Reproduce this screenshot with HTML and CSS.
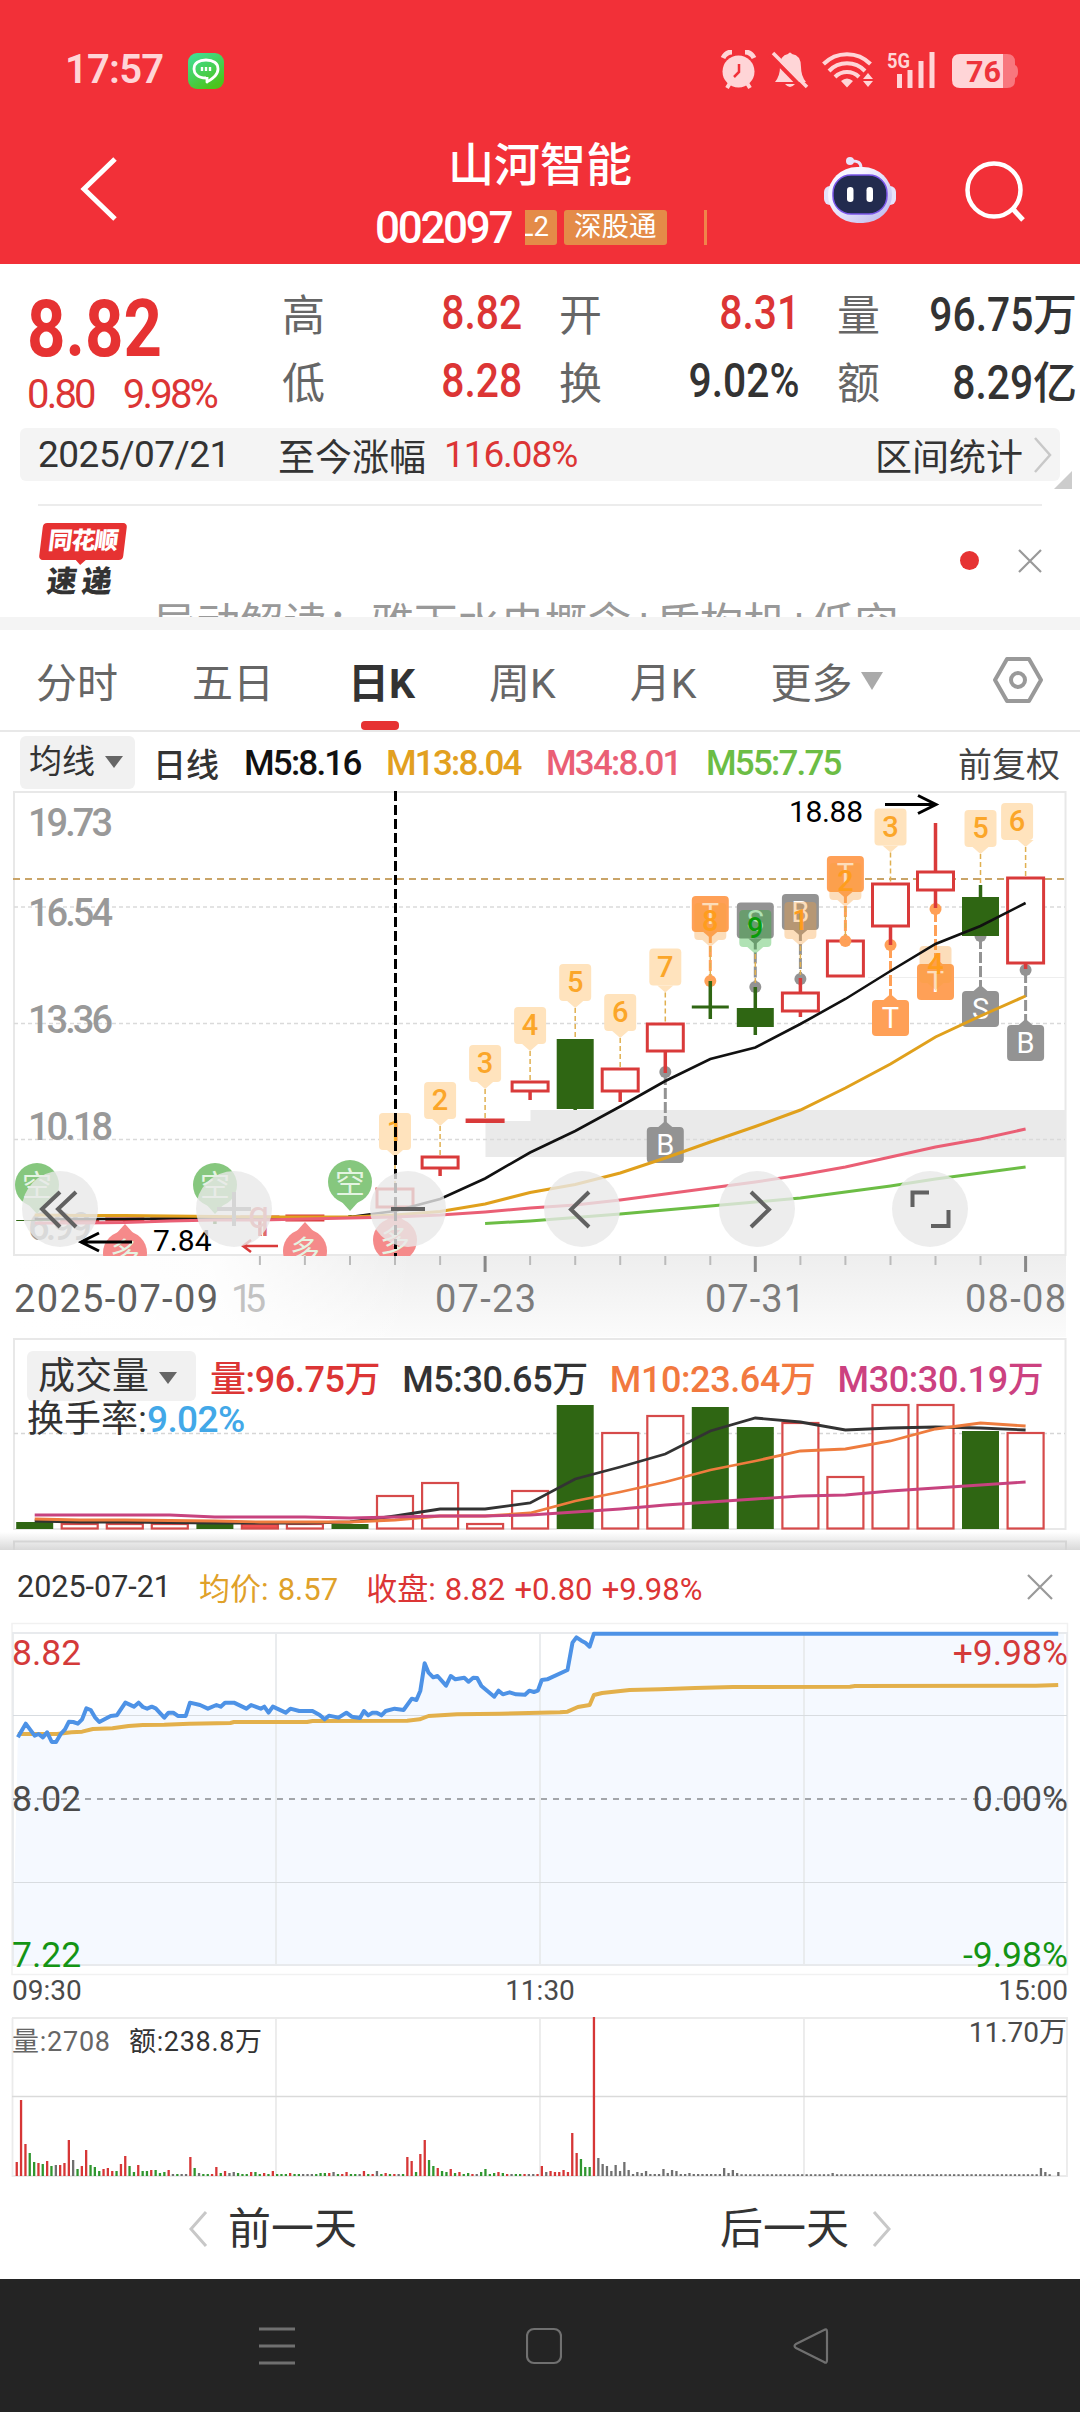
FILE: index.html
```
<!DOCTYPE html>
<html lang="zh-CN">
<head>
  <meta charset="UTF-8">
  <meta name="viewport" content="width=device-width, initial-scale=1.0">
  <title>山河智能 002097</title>
  <link rel="stylesheet" href="styles.css">
</head>
<body>

  <div class="top">
    <div class="status">
      <span class="clock">17:57</span>
      <svg class="app-icon" viewBox="0 0 36 36">
        <defs><linearGradient id="appg" x1="0" y1="0" x2="0.6" y2="1"><stop offset="0" stop-color="#3fe0a0"/><stop offset="1" stop-color="#4cc41c"/></linearGradient></defs>
        <rect width="36" height="36" rx="9" fill="url(#appg)"/>
        <path d="M18 25C9 25 6 20 6 16c0-6 5-9 12-9s12 3 12 9c0 6-5 9-11 13v-5" fill="none" stroke="#fff" stroke-width="2.800" stroke-linejoin="round"/>
        <path d="M14 14v4M18 14v4M22 14v4" stroke="#fff" stroke-width="2.4"/>
      </svg>
      <svg class="status-icons" viewBox="0 0 300 42" fill="#ffd5d7">
        <circle cx="18.500" cy="21.500" r="16"/>
        <path d="M3 8q3-6 9-6M25 2q6 0 9 6" fill="none" stroke="#ffd5d7" stroke-width="5"/>
        <path d="M10 33l-3 5M27 33l3 5" stroke="#ffd5d7" stroke-width="4"/>
        <path d="M19 14v8l-5 5" fill="none" stroke="#f23038" stroke-width="2.500"/>
        <path d="M55 32q5-6 5-15 0-12 8-13 2-3 4 0 9 1 9 13 0 9 5 15zM65 34h10q-5 6-10 0z"/>
        <path d="M50 5l34 35" stroke="#f23038" stroke-width="4"/>
        <path d="M53 3l34 34" stroke="#ffd5d7" stroke-width="3.500"/>
        <path d="M103.500 14a33 33 0 0 1 47 0M109 21a25 25 0 0 1 36 0M115 27a17 17 0 0 1 24 0" fill="none" stroke="#ffd5d7" stroke-width="4"/>
        <path d="M121 31q6-5 12 0l-6 6.500zM143 29l5-6 5 6zM143 31l5 6 5-6z"/>
        <text x="167" y="17.500" font-size="21" font-weight="700" textLength="23" lengthAdjust="spacingAndGlyphs">5G</text>
        <path d="M177 24h5v14h-5zM187.500 20h5v18h-5zM198.500 11h5v27h-5zM209.500 2h5v36h-5z"/>
        <path d="M283 4h4q8 0 8 8v3q3 1 3 6.500t-3 6.500v3q0 7-8 7h-4z" fill="#f8777e"/>
        <path d="M240 4h43v34h-43q-8 0-8-8V12q0-8 8-8z"/>
        <text x="246" y="32" font-size="30" font-weight="700" fill="#ee333b" textLength="35" lengthAdjust="spacingAndGlyphs">76</text>
      </svg>
    </div>

    <div class="header">
      <svg class="back" viewBox="0 0 40 66"><path d="M36 3L5 33l31 30" fill="none" stroke="#fff" stroke-width="5"/></svg>
      <div class="stock">
        <div class="stock-name">山河智能</div>
        <div class="stock-sub">
          <span class="code">002097</span>
          <span class="badges">
            <span class="badge l2">L2</span>
            <span class="badge">深股通</span>
            <span class="badge-line"></span>
          </span>
        </div>
      </div>
      <svg class="robot" viewBox="0 0 72 68">
        <defs><linearGradient id="rb" x1="0" y1="0" x2="1" y2="1"><stop offset="0.300" stop-color="#f7f5ff"/><stop offset="1" stop-color="#b9b4ec"/></linearGradient></defs>
        <path d="M37 12q0-8-10-7" fill="none" stroke="#e8e4fb" stroke-width="3"/>
        <circle cx="26" cy="5" r="4" fill="#e8e4fb"/>
        <rect x="0" y="30" width="72" height="19" rx="6" fill="#e6e2fa"/>
        <rect x="4" y="11" width="64" height="56" rx="29" fill="url(#rb)"/>
        <rect x="9" y="19" width="54" height="39" rx="18" fill="#222b4e" stroke="#7a55e8" stroke-width="1.500"/>
        <rect x="23" y="31" width="6.500" height="15" rx="3.200" fill="#fff"/>
        <rect x="42.500" y="31" width="6.500" height="15" rx="3.200" fill="#fff"/>
      </svg>
      <svg class="search" viewBox="0 0 62 62"><circle cx="29" cy="29" r="26.500" fill="none" stroke="#fff" stroke-width="4.500"/><path d="M47 47l11 12" stroke="#fff" stroke-width="5"/></svg>
    </div>
  </div>

  <div class="quote">
    <div class="price">
      <div class="last"><span class="din">8.82</span></div>
      <div class="change"><span>0.80</span><span>9.98%</span></div>
    </div>
    <div class="cell"><span class="k">高</span><span class="v red"><span class="din r">8.82</span></span></div>
    <div class="cell"><span class="k">开</span><span class="v red"><span class="din r">8.31</span></span></div>
    <div class="cell"><span class="k">量</span><span class="v"><span class="din r">96.75</span><span class="unit">万</span></span></div>
    <div class="cell"><span class="k">低</span><span class="v red"><span class="din r">8.28</span></span></div>
    <div class="cell"><span class="k">换</span><span class="v"><span class="din r">9.02%</span></span></div>
    <div class="cell"><span class="k">额</span><span class="v"><span class="din r">8.29</span><span class="unit">亿</span></span></div>
  </div>

  <div class="range">
    <span class="range-date">2025/07/21</span>
    <span class="range-label">至今涨幅</span>
    <span class="range-pct">116.08%</span>
    <span class="range-stat">区间统计</span>
    <svg class="chev" viewBox="0 0 20 36"><path d="M2 1l15 17L2 35" fill="none" stroke="#c8c8c8" stroke-width="2.500"/></svg>
    <svg class="corner" viewBox="0 0 18 18"><path d="M18 0v18H0z" fill="#ccc"/></svg>
  </div>

  <div class="news">
    <div class="news-logo">
      <div class="logo-red"><span>同花顺</span></div>
      <div class="logo-black">速递</div>
    </div>
    <div class="news-text">异动解读：雅下水电概念+盾构机+低空</div>
    <span class="dot"></span>
    <svg class="x" viewBox="0 0 24 24"><path d="M1 1l22 22M23 1L1 23" stroke="#999" stroke-width="2.200"/></svg>
  </div>

  <div class="tabs">
    <span>分时</span>
    <span>五日</span>
    <span class="active">日K</span>
    <span>周K</span>
    <span>月K</span>
    <span>更多<i class="tri light"></i></span>
    <svg class="hex" viewBox="0 0 50 46"><path d="M14 2h22l12 21-12 21H14L2 23z" fill="none" stroke="#999" stroke-width="4" stroke-linejoin="round"/><circle cx="25" cy="23" r="7" fill="none" stroke="#999" stroke-width="4"/></svg>
  </div>

  <div class="ma-bar">
    <span class="chip">均线<i class="tri"></i></span>
    <span class="ma-day">日线</span>
    <span class="m m5">M5:8.16</span>
    <span class="m m13">M13:8.04</span>
    <span class="m m34">M34:8.01</span>
    <span class="m m55">M55:7.75</span>
    <span class="adjust">前复权</span>
  </div>

  <svg id="kline" class="kline" viewBox="0 791 1080 547"></svg>

  <div class="volume">
    <svg id="vol" class="vol-chart" viewBox="0 1338 1080 212"></svg>
    <div class="vol-row">
      <span class="chip">成交量<i class="tri"></i></span>
      <span class="red">量:96.75万</span>
      <span>M5:30.65万</span>
      <span class="v10">M10:23.64万</span>
      <span class="v30">M30:30.19万</span>
    </div>
    <div class="turnover">换手率:<b>9.02%</b></div>
  </div>

  <div class="panel">
    <div class="panel-head">
      <span class="day">2025-07-21</span>
      <span class="avg">均价: 8.57</span>
      <span class="red">收盘: 8.82 +0.80 +9.98%</span>
      <svg class="x" viewBox="0 0 26 26"><path d="M1 1l24 24M25 1L1 25" stroke="#999" stroke-width="2.200"/></svg>
    </div>
    <svg id="minute" class="minute" viewBox="0 1618 1080 582"></svg>
    <div class="pager">
      <span class="prev"><svg class="chev" viewBox="0 0 20 36"><path d="M18 1L3 18l15 17" fill="none" stroke="#c8c8c8" stroke-width="3"/></svg>前一天</span>
      <span class="next">后一天<svg class="chev" viewBox="0 0 20 36"><path d="M2 1l15 17L2 35" fill="none" stroke="#c8c8c8" stroke-width="3"/></svg></span>
    </div>
  </div>

  <div class="navbar">
    <svg viewBox="0 0 36 38"><path d="M0 2h36M0 19h36M0 36h36" stroke="#707070" stroke-width="3"/></svg>
    <svg viewBox="0 0 36 38"><rect x="1" y="2" width="34" height="34" rx="7" fill="none" stroke="#707070" stroke-width="2.200"/></svg>
    <svg viewBox="0 0 36 38"><path d="M31 3q3-2 3 2v28q0 4-3 2L3 21q-3-2 0-4z" fill="none" stroke="#707070" stroke-width="2.200"/></svg>
  </div>

  <script>
    const RED = '#d93a3a', GREEN = '#2f6613';
    const X = i => +(34.7 + i * 45.04).toFixed(1);
    const line = (ys, color, w, start = 0) =>
      `<polyline points="${ys.map((y, i) => X(i + start) + ',' + y).join(' ')}" fill="none" stroke="${color}" stroke-width="${w}"/>`;
    const text = (x, y, size, fill, str, extra = '') =>
      `<text x="${x}" y="${y}" font-size="${size}" fill="${fill}" ${extra}>${str}</text>`;

    // ---------- daily K ----------
    // index, body top, body bottom, wick top, wick bottom, rising
    const candles = [
      [0, 1220, 1221, 1220, 1221, 0], [1, 1220, 1221, 1220, 1221, 1], [2, 1219, 1220, 1219, 1222, 1],
      [3, 1219, 1220, 1219, 1221, 1], [4, 1219, 1220, 1219, 1224, 0], [5, 1217, 1219, 1217, 1236, 1],
      [6, 1216, 1220, 1216, 1220, 1], [7, 1217, 1218, 1215, 1218, 0], [8, 1189, 1207, 1189, 1207, 1],
      [9, 1157, 1168, 1157, 1176, 1], [10, 1120, 1121.5, 1120, 1121, 1], [11, 1082, 1091, 1082, 1100, 1],
      [12, 1039, 1109, 1039, 1110, 0], [13, 1069, 1091, 1069, 1102, 1], [14, 1024, 1051, 1024, 1073, 1],
      [15, 1005.5, 1008.5, 981, 1019, 0], [16, 1008, 1027, 987, 1035, 0], [17, 993, 1011, 978, 1017, 1],
      [18, 941, 976, 941, 976, 1], [19, 884, 926, 884, 945, 1], [20, 872, 890, 823, 908, 1],
      [21, 897, 936, 885, 936, 0], [22, 878, 963, 878, 969, 1]
    ];

    function countTag(i, top, n, to, dx = 0, color = '#fba629', bg = '#ffe3bd', op = 1) {
      const x = X(i), c = x + dx;
      return `<g opacity="${op}"><rect x="${c - 16}" y="${top}" width="32" height="37" rx="4" fill="${bg}"/>
        <path d="M${x - 8} ${top + 37}h16l-8 7z" fill="${bg}"/></g>
        <path d="M${x} ${top + 44}V${to}" stroke="#e0b050" stroke-width="1.5" stroke-dasharray="5 3"/>
        ${text(c, top + 28, 29, color, n, 'text-anchor="middle" font-weight="500"')}`;
    }

    function tradeBox(i, top, letter, dot, color) {
      const x = X(i), above = dot > top;
      const tip = above ? `M${x - 7} ${top + 36}l7 6 7-6z` : `M${x - 7} ${top}l7-6 7 6z`;
      return `<g><path d="M${x} ${above ? top + 36 : top}V${dot}" stroke="${color}" stroke-width="3" stroke-dasharray="11 3"/>
        <circle cx="${x}" cy="${dot}" r="6" fill="${color}"/>
        <rect x="${x - 18.5}" y="${top}" width="37" height="36" rx="4" fill="${color}"/><path d="${tip}" fill="${color}"/>
        ${text(x, top + 28, 29, '#fff', letter, 'text-anchor="middle"')}</g>`;
    }

    function bubble(x, y, ch, color, dir) {
      return `<circle cx="${x}" cy="${y}" r="22" fill="${color}"/><path d="M${x - 10} ${y + dir * 18}h20l-10 ${dir * 11}z" fill="${color}"/>
        ${text(x, y + 11, 30, '#e4f4e2', ch, 'text-anchor="middle"')}`;
    }

    const T = '#ffa057', G = '#939393';
    let k = `<defs><clipPath id="plot"><rect x="13" y="791" width="1053" height="465"/></clipPath>
      <linearGradient id="axis" x1="0" y1="0" x2="0" y2="1"><stop offset="0" stop-color="#eee"/><stop offset="1" stop-color="#fbfbfb"/></linearGradient>
      <linearGradient id="fade"><stop offset="0" stop-color="#fff"/><stop offset="0.5" stop-color="#fff" stop-opacity=".9"/><stop offset="1" stop-color="#fff" stop-opacity="0"/></linearGradient></defs>
      <rect x="14" y="1256" width="1052" height="81" fill="url(#axis)"/><rect x="13" y="1256" width="400" height="81" fill="url(#fade)"/>
      <rect x="14" y="792" width="1051.5" height="463" fill="none" stroke="#e8e8e8" stroke-width="2"/>
      <path d="M485.500 1121h45v-11H1066v47H485.500z" fill="#eaeaea"/>
      <path d="M14 907H1065M14 1023.500H1065M14 1139.500H1065" stroke="#dadada" stroke-width="1.300" stroke-dasharray="4 3"/>
      <path d="M868 977.500H1065" stroke="#eee"/>
      <path d="M13 879H1065" stroke="#c9a468" stroke-width="2" stroke-dasharray="7 5"/>`;
    [['19.73', 836], ['16.54', 926], ['13.36', 1033], ['10.18', 1140], ['6.99', 1240]].forEach(([t, y]) => {
      k += text(28, y, 38, '#999', t, `font-weight="500" textLength="${t.length > 4 ? 85 : 64}"`);
    });
    k += '<g clip-path="url(#plot)">';
    k += bubble(37, 1185, '空', '#86c77e', 1) + bubble(215, 1185, '空', '#86c77e', 1) + bubble(350, 1182, '空', '#86c77e', 1);
    k += bubble(125, 1253, '多', '#f58a8a', -1) + bubble(305, 1251, '多', '#f58a8a', -1) + bubble(395, 1240, '多', '#f58a8a', -1);
    k += '</g>';
    k += tradeBox(14, 1127, 'B', 1072, G) + tradeBox(15, 896, 'T', 981, T) + tradeBox(16, 902.5, 'S', 987, G) + tradeBox(17, 894, 'B', 979, G)
      + tradeBox(19, 1000, 'T', 945, T) + tradeBox(20, 964, 'T', 909, T) + tradeBox(21, 991, 'S', 936, G) + tradeBox(22, 1025, 'B', 970, G);
    candles.forEach(([i, a, b, w1, w2, up]) => {
      const x = X(i), c = up ? RED : GREEN;
      k += `<path d="M${x} ${w1}V${up ? a : b}M${x} ${b}V${w2}" stroke="${c}" stroke-width="3.5"/>`;
      k += up ? `<rect x="${x - 18}" y="${a}" width="36" height="${b - a}" fill="#fff" stroke="${c}" stroke-width="3"/>`
              : `<rect x="${x - 18.500}" y="${a}" width="37" height="${b - a}" fill="${c}"/>`;
    });
    k += tradeBox(18, 856, 'T', 941, T);
    k += countTag(8, 1113, 1, 1188) + countTag(9, 1082, 2, 1156) + countTag(10, 1045, 3, 1120) + countTag(11, 1007, 4, 1081)
      + countTag(12, 964, 5, 1039) + countTag(13, 994, 6, 1068) + countTag(14, 948.5, 7, 1023) + countTag(19, 808.5, 3, 883)
      + countTag(21, 810, 5, 885) + countTag(22, 803, 6, 877, -8.5);
    k += countTag(15, 903, 8, 980, 0, '#ff9d1c', '#f9a03c', .35) + countTag(16, 910, 9, 985, 0, '#0a9c0a', '#1fae2a', .35)
      + countTag(17, 902, 1, 977, 0, '#ff9d1c', '#f9a03c', .35) + countTag(18, 863, 2, 940, 0, '#ff9d1c', '#f9a03c', .35)
      + countTag(20, 946, 4, 990, 0, '#ff9d1c', '#f9a03c', .35);
    k += line([1219, 1219, 1219, 1218.5, 1218, 1218, 1218, 1217, 1211, 1199, 1178.5, 1152.5, 1131, 1106.5, 1081, 1059, 1047.5, 1024, 999, 971, 944, 926, 903], '#111', 2.6);
    k += line([1215, 1215.5, 1215.5, 1216, 1216.5, 1217, 1217, 1217, 1215, 1211.5, 1204, 1192.5, 1184.5, 1173, 1158, 1142, 1126.5, 1110, 1088, 1064, 1037, 1016, 996], '#e0a01c', 3);
    k += line([1223, 1223, 1222.5, 1221, 1220, 1220, 1219, 1218, 1217, 1215, 1212, 1208, 1205, 1200, 1194, 1188, 1182, 1175, 1167, 1157, 1147, 1139, 1129], '#ea5f75', 3);
    k += line([1223.5, 1221, 1217.5, 1214, 1210, 1206, 1202, 1198, 1192, 1186, 1179, 1173, 1167], '#6cbd45', 3, 10);
    k += text(789, 822, 30, '#000', '18.88', 'textLength="74"') + text(153, 1251, 30, '#000', '7.84');
    k += `<path d="M885 804.500h50M918 795.500l18 9-18 9M132 1242H81M99 1233l-18 9 18 9" fill="none" stroke="#000" stroke-width="3"/>
      <path d="M278 1246h-34M251 1240l-8 6 8 6" fill="none" stroke="${RED}" stroke-width="2.500"/>
      <path d="M395.500 791V1256" stroke="#000" stroke-width="3" stroke-dasharray="10 4"/>`;
    k += text(248, 1228, 38, '#e06a6a', 'q');
    // round tool buttons
    [60, 234, 408, 582, 757, 930].forEach(x => { k += `<circle cx="${x}" cy="1209" r="38" fill="#e8e8e8" opacity=".8"/>`; });
    k += `<g fill="none" stroke="#616161" stroke-width="4"><path d="M60 1192l-18 17 18 18M76 1192l-18 17 18 18M391 1209h34"/>
      <path d="M589 1192l-18 17.500 18 17.500M751 1192l18 17.500-18 17.500M912.500 1207v-14.500H929M931 1226h17.500v-16"/></g>
      <path d="M217 1209h34M234 1192v34" stroke="#d5d5d5" stroke-width="4"/>`;
    for (let i = 5; i < 23; i++) {
      const big = [10, 16, 22].includes(i);
      k += `<path d="M${X(i)} 1256v${big ? 16 : 9}" stroke="${big ? '#888' : '#bbb'}" stroke-width="${big ? 3 : 2}"/>`;
    }
    k += text(14, 1312, 38, '#606060', '2025-07-09', 'textLength="204"') + text(231, 1312, 38, '#c2c2c2', '15', 'textLength="35"')
      + text(435, 1312, 38, '#7c7c7c', '07-23', 'textLength="101"') + text(705, 1312, 38, '#7c7c7c', '07-31', 'textLength="100"')
      + text(965, 1312, 38, '#7c7c7c', '08-08', 'textLength="101"');
    document.getElementById('kline').innerHTML = k;

    // ---------- daily volume ----------
    const vols = [1522, 1524, 1524, 1524, 1523, 1524, 1524, 1524, 1496, 1483, 1524, 1491, 1405, 1433, 1416, 1407, 1427, 1423, 1477, 1405, 1405, 1431, 1433];
    const down = [0, 4, 7, 12, 15, 16, 21];
    let v = `<defs><linearGradient id="sh" x1="0" y1="0" x2="0" y2="1"><stop offset="0" stop-color="#fff"/><stop offset="1" stop-color="#d9d9d9"/></linearGradient></defs>
      <rect x="0" y="1532" width="1080" height="18" fill="url(#sh)"/><path d="M14 1550v-8.500H1066v8.500" fill="none" stroke="#d5d5d5" stroke-width="2"/>
      <rect x="14" y="1339" width="1051.500" height="190" fill="none" stroke="#e8e8e8" stroke-width="2"/>
      <path d="M14 1433.500H1065" stroke="#d6d6d6" stroke-width="1.500" stroke-dasharray="4 3"/>`;
    vols.forEach((y, i) => {
      const x = X(i);
      v += down.includes(i) ? `<rect x="${x - 18.5}" y="${y}" width="37" height="${1529 - y}" fill="${GREEN}"/>`
        : `<rect x="${x - 18}" y="${y}" width="36" height="${1528.5 - y}" fill="${i === 5 ? '#f25050' : '#fff'}" stroke="#d64a4a" stroke-width="2.2"/>`;
    });
    v += line([1521, 1522, 1522, 1522.5, 1523, 1523, 1523, 1522, 1516, 1509, 1509, 1503, 1479, 1467, 1454, 1431, 1418, 1422, 1430, 1428, 1427, 1428, 1430], '#333', 2.800);
    v += line([1519, 1520, 1520, 1520.5, 1521, 1522, 1522, 1522, 1520, 1516, 1516, 1513, 1501, 1492, 1482, 1470, 1461, 1451, 1449, 1441, 1429, 1423, 1426], '#ee7c3e', 2.800);
    v += line([1515, 1515, 1515, 1515, 1517, 1517, 1517, 1518, 1517, 1516, 1516, 1515, 1512, 1509, 1505, 1502, 1499, 1496, 1495, 1491, 1488, 1485, 1482], '#c7437f', 2.800);
    document.getElementById('vol').innerHTML = v;

    // ---------- intraday ----------
    const price = '50,412 72,371 97,407 108,402 120,412 132,397 145,426 157,426 170,402 182,388 193,365 205,366 218,371 230,358 242,325 254,330 266,352 278,366 310,348 327,346 351,308 375,320 388,308 400,321 412,326 425,320 436,325 460,353 472,338 485,338 498,348 520,348 532,308 560,315 582,326 606,315 618,320 630,308 655,308 690,326 703,315 730,326 740,320 752,338 764,320 800,338 813,326 838,333 875,333 895,345 909,358 921,347 948,353 970,338 985,350 1008,354 1019,333 1031,346 1043,338 1055,338 1068,346 1080,333 1105,326 1130,330 1153,296 1166,300 1177,272 1189,190 1200,218 1213,232 1225,228 1249,257 1262,228 1275,238 1300,233 1312,245 1325,233 1336,234 1348,258 1384,290 1396,272 1408,283 1427,277 1445,283 1470,284 1482,272 1495,276 1506,272 1517,240 1532,238 1589,210 1603,128 1614,112 1628,122 1639,128 1651,140 1663,101 2963,101';
    const avg = '50,402 160,402 200,397 230,395 260,387 315,385 360,378 400,375 460,374 530,371 645,369 655,366 860,366 875,363 1140,362 1175,358 1200,348 1280,343 1400,341 1568,337 1589,335 1618,321 1651,315 1663,285 1686,279 1763,270 1849,268 1946,264 2052,261 2380,260 2394,258 2900,257 2963,255';
    let m = `<rect x="12" y="1623.500" width="1055.500" height="351" fill="none" stroke="#f1f1f1" stroke-width="1.500"/>
      <g transform="translate(0 1600) scale(.35714 .33333)"><polygon points="35,1095 50,412 ${price} 2979,101 2979,1095" fill="#f5f9ff"/></g>
      <path d="M12 1633H1067V1965H13V1633M276 1633v332M540 1633v332M804 1633v332" fill="none" stroke="#e8eaed" stroke-width="1.800"/>
      <path d="M13 1715.500H1067M13 1882.500H1067" stroke="#d8dce0" stroke-width="1.200"/>
      <path d="M13 1799H1067" stroke="#a3a6aa" stroke-width="2" stroke-dasharray="6 6"/>
      <g transform="translate(0 1600) scale(.35714 .33333)" fill="none" stroke-width="4" stroke-linejoin="round">
      <polyline points="${avg}" stroke="#e3b04b" vector-effect="non-scaling-stroke"/><polyline points="${price}" stroke="#4d92e6" vector-effect="non-scaling-stroke"/></g>`;
    m += text(12, 1665, 35.5, '#d43a3a', '8.82') + text(12, 1811, 35.5, '#4a4a4a', '8.02') + text(12, 1967, 35.5, '#149414', '7.22');
    m += text(1068, 1665, 35.5, '#d43a3a', '+9.98%', 'text-anchor="end"') + text(1068, 1811, 35.5, '#4a4a4a', '0.00%', 'text-anchor="end"') + text(1068, 1967, 35.5, '#149414', '-9.98%', 'text-anchor="end"');
    m += text(12, 2000, 28, '#4a4a4a', '09:30') + text(540, 2000, 28, '#4a4a4a', '11:30', 'text-anchor="middle"') + text(1068, 2000, 28, '#4a4a4a', '15:00', 'text-anchor="end"');

    // minute volume: colour letter + bar height
    const bars = 'r14 r76 r32 g23 g14 r13 g12 r15 g10 k11 r11 r13 r36 k16 g7 r10 r26 g11 g9 g5 r7 r8 r5 g5 r12 r20 g10 g4 r11 g5 g5 r6 g6 g3 g4 r6 k2 g2 k2 k2 r19 g8 k3 g2 g2 r2 r9 g3 r5 k3 k4 g3 g2 g2 r4 g4 g2 r3 g2 r5 g2 g2 g2 r3 g2 g2 k2 k2 k2 g2 g3 g3 r3 k4 g2 r2 r4 g2 g2 k2 r5 g2 r2 k5 g2 r3 g2 r2 k2 g2 r19 r15 g4 r22 r36 g16 g10 r8 g5 g4 r7 g3 r4 g2 g3 r2 k2 g4 g7 g2 g3 r4 g3 r2 k2 g2 g2 r2 k2 k2 r2 r10 k4 r5 r4 r4 r6 r4 r43 r23 g17 g9 g9 r159 k18 k12 k10 k5 k11 k5 k14 k6 k2 k4 k3 k5 k2 k2 k2 k7 k3 k6 k5 k2 k2 k3 k2 k2 k2 k2 k2 k2 k2 k8 k3 k6 k3'.split(' ');
    while (bars.length < 241) bars.push('k1.8');
    bars[188] = 'k3'; bars[236] = 'k8'; bars[237] = 'k4'; bars[239] = 'k0'; bars[240] = 'k4';
    const barColor = { r: '#d63636', g: '#2f962f', k: '#707070' };
    m += `<path d="M12 2018H1067V2176H12.500V2018M276 2018v158M540 2018v158M804 2018v158" fill="none" stroke="#ebebeb" stroke-width="1.800"/>
      <path d="M12 2096.500H1067" stroke="#dadada" stroke-width="1.400"/>`;
    bars.forEach((b, i) => {
      const h = +b.slice(1);
      m += `<rect x="${(15.6 + i * 4.34).toFixed(1)}" y="${2176 - h}" width="2.3" height="${h}" fill="${barColor[b[0]]}"/>`;
    });
    m += text(12, 2051, 27, '#666', '量:2708', 'textLength="98"') + text(129, 2051, 27, '#333', '额:238.8万', 'textLength="133"')
      + text(1067, 2042, 28, '#4a4a4a', '11.70万', 'text-anchor="end"');
    document.getElementById('minute').innerHTML = m;
  </script>
</body>
</html>
```
FILE: styles.css
```
* {
  box-sizing: border-box;
}

body {
  margin: 0;
  width: 1080px;
  background: #fff;
  color: #333;
  font-family: Roboto, "Noto Sans CJK SC", sans-serif;
  overflow-x: hidden;
}

svg {
  display: block;
  flex: none;
}

i {
  font-style: normal;
}

.red {
  color: #dc3535;
}

/* header */
.top {
  height: 264px;
  background: #f23038;
  color: #fff;
}

.status {
  height: 128px;
  padding: 50px 60px 0 65px;
  display: flex;
  align-items: flex-start;
}

.clock {
  width: 123px;
  font-size: 40px;
  line-height: 40px;
  font-weight: 600;
  letter-spacing: -0.8px;
  color: #ffd5d7;
}

.app-icon {
  width: 36px;
  height: 36px;
  margin-top: 3px;
}

.status-icons {
  width: 300px;
  height: 42px;
  margin-left: auto;
}

.header {
  height: 136px;
  padding: 0 51px 0 79px;
  display: flex;
  align-items: flex-start;
}

.back {
  width: 40px;
  height: 66px;
  margin-top: 28px;
}

.stock {
  width: 342px;
  margin: 12px 0 0 256px;
}

.stock-name {
  font-size: 46px;
  line-height: 50px;
  font-weight: 500;
  padding-left: 73px;
}

.stock-sub {
  display: flex;
  align-items: center;
  height: 40px;
  margin-top: 17px;
}

.code {
  width: 150px;
  padding-top: 2px;
  font-size: 44px;
  font-weight: 500;
  letter-spacing: -2.3px;
}

.badges {
  display: flex;
  gap: 7px;
  overflow: hidden;
}

.badge {
  height: 35px;
  padding: 0 10px;
  border-radius: 3px;
  background: #e48b48;
  font-size: 27.5px;
  line-height: 34px;
}

.badge.l2 {
  width: 32px;
  padding: 0 8px 0 0;
  display: flex;
  justify-content: flex-end;
  overflow: hidden;
  border-radius: 0 3px 3px 0;
}

.badge-line {
  width: 3px;
  height: 35px;
  margin-left: 30px;
  background: #f0844a;
}

.robot {
  width: 72px;
  height: 68px;
  margin: 28px 0 0 107px;
}

.search {
  width: 62px;
  height: 62px;
  margin: 33px 0 0 69px;
}

/* quote */
.quote {
  height: 164px;
  padding: 16px 0 0 27px;
  display: grid;
  grid-template-columns: 218px 240px 241px 240px;
  grid-template-rows: 68px 68px;
  column-gap: 37px;
}

.price {
  grid-row: 1 / 3;
  padding-top: 4px;
  color: #e63232;
}

.last {
  height: 84px;
  font-size: 79px;
  line-height: 90px;
  font-weight: 700;
}

.last .din {
  transform: scaleX(.85);
}

.change {
  display: flex;
  gap: 29px;
  height: 50px;
  font-size: 40px;
  line-height: 54px;
  letter-spacing: -2.8px;
  color: #dc3535;
}

.cell {
  height: 64px;
  display: flex;
  justify-content: space-between;
  align-items: center;
}

.k {
  font-size: 43px;
  color: #666;
}

.v {
  font-size: 48px;
  font-weight: 500;
  white-space: nowrap;
}

.unit {
  font-size: 44px;
}

.din {
  display: inline-block;
  transform: scaleX(.85);
  transform-origin: left;
}

.din.r {
  transform-origin: right;
}

/* date range */
.range {
  position: relative;
  height: 53px;
  margin: 0 20px;
  padding: 0 7px 0 18px;
  display: flex;
  align-items: center;
  border-radius: 6px;
  background: #f4f4f4;
  font-size: 37px;
}

.range-date {
  width: 240px;
  letter-spacing: -0.5px;
}

.range-label {
  width: 166px;
}

.range-pct {
  color: #dc3535;
  letter-spacing: -1.1px;
}

.range-stat {
  margin-left: auto;
  margin-right: 10px;
}

.chev {
  width: 20px;
  height: 36px;
}

.corner {
  position: absolute;
  right: -12px;
  bottom: -8px;
  width: 18px;
  height: 18px;
}

/* news strip */
.news {
  height: 126px;
  margin-top: 23px;
  padding: 19px 38px 0;
  display: flex;
  overflow: hidden;
  border-bottom: 13px solid #f4f4f4;
  background: linear-gradient(#ececec, #ececec) center top / 1004px 2px no-repeat;
}

.news-logo {
  width: 115px;
}

.logo-red {
  width: 84px;
  height: 37px;
  margin-left: 3px;
  border-radius: 4px;
  background: #e63232;
  color: #fff;
  transform: skewX(-7deg);
  font-size: 24px;
  line-height: 36px;
  font-weight: 900;
  text-align: center;
  letter-spacing: -1px;
}

.logo-red::after {
  content: "";
  display: block;
  width: 0;
  margin: 0 auto;
  border: 6px solid transparent;
  border-top-color: #e63232;
}

.logo-black {
  padding-left: 9px;
  margin-top: 6px;
  font-size: 30px;
  line-height: 32px;
  font-weight: 900;
  letter-spacing: 5px;
  transform: skewX(-7deg);
}

.news-text {
  width: 770px;
  padding-top: 77px;
  font-size: 43.5px;
  line-height: 50px;
  color: #999;
  white-space: nowrap;
}

.dot {
  width: 19px;
  height: 19px;
  margin: 28px 0 0 37px;
  border-radius: 50%;
  background: #e63232;
}

.x {
  width: 24px;
  height: 24px;
  margin-left: auto;
}

.news .x {
  margin-top: 26px;
}

/* tabs */
.tabs {
  height: 102px;
  padding: 0 37px 0 36px;
  display: flex;
  align-items: center;
  gap: 74px;
  border-bottom: 2px solid #e8e8e8;
  font-size: 41px;
  color: #666;
}

.tabs span {
  position: relative;
  white-space: nowrap;
}

.tabs .active {
  color: #333;
  font-weight: 700;
}

.tabs .active::after {
  content: "";
  position: absolute;
  left: 13px;
  bottom: -20px;
  width: 38px;
  height: 9px;
  border-radius: 4px;
  background: #e63232;
}

.tri {
  display: inline-block;
  margin-left: 10px;
  vertical-align: 5px;
  border: 9px solid transparent;
  border-top: 12px solid #666;
  border-bottom: 0;
}

.tri.light {
  margin-left: 8px;
  vertical-align: 8px;
  border-width: 18px 11px 0;
  border-top-color: #aaa;
}

.hex {
  width: 50px;
  height: 46px;
  margin-left: auto;
}

/* moving averages */
.ma-bar {
  height: 59px;
  padding: 2px 20px 0;
  display: flex;
  align-items: center;
  font-size: 33px;
}

.chip {
  height: 53px;
  padding: 0 12px 0 9px;
  border-radius: 6px;
  background: #f1f1f1;
  line-height: 51px;
  white-space: nowrap;
}

.ma-day {
  margin: 0 25px 0 18px;
  font-weight: 500;
}

.m {
  width: 160px;
  padding-top: 2px;
  font-size: 35px;
  font-weight: 500;
  letter-spacing: -1.8px;
}

.m5 {
  width: 142px;
  color: #111;
}

.m13 { color: #e2a020; }
.m34 { color: #ea5f75; }
.m55 { color: #6cbd45; }

.adjust {
  margin-left: auto;
  font-size: 34px;
  color: #444;
}

.kline {
  width: 1080px;
  height: 547px;
}

/* volume */
.volume {
  position: relative;
  height: 212px;
  padding: 13px 0 0 27px;
}

.vol-chart {
  position: absolute;
  left: 0;
  top: 0;
  width: 1080px;
  height: 212px;
}

.vol-row {
  position: relative;
  display: flex;
  align-items: center;
  gap: 22px;
  height: 50px;
  font-size: 36px;
  font-weight: 500;
  letter-spacing: -0.4px;
  white-space: nowrap;
}

.vol-row .chip {
  height: 50px;
  width: 169px;
  margin-right: -8px;
  padding-left: 11px;
  font-size: 37px;
  font-weight: 400;
  letter-spacing: 0;
}

.v10 { color: #f2793f; }
.v30 { color: #cc4180; }

.turnover {
  position: relative;
  font-size: 37px;
  line-height: 38px;
}

.turnover b {
  color: #42a8e8;
  font-weight: 500;
  letter-spacing: -0.6px;
}

/* intraday panel */
.panel {
  height: 729px;
  background: #fff;
}

.panel-head {
  height: 68px;
  padding: 4px 27px 0 17px;
  display: flex;
  align-items: center;
  gap: 28px;
  font-size: 31px;
  word-spacing: 1.5px;
  white-space: nowrap;
}

.panel-head .day {
  font-size: 30.5px;
}

.panel-head .x {
  width: 26px;
  height: 26px;
  margin-top: 2px;
}

.avg {
  color: #dfa12a;
}

.minute {
  width: 1080px;
  height: 582px;
}

.pager {
  height: 58px;
  padding: 0 188px;
  display: flex;
  justify-content: space-between;
  align-items: center;
  font-size: 43px;
  line-height: 52px;
}

.pager span {
  display: flex;
  align-items: center;
  gap: 20px;
}

.pager .next {
  gap: 23px;
}

.navbar {
  height: 133px;
  padding-left: 8px;
  display: flex;
  justify-content: center;
  align-items: center;
  gap: 231px;
  background: #242424;
}

.navbar svg {
  width: 36px;
  height: 38px;
}
```
